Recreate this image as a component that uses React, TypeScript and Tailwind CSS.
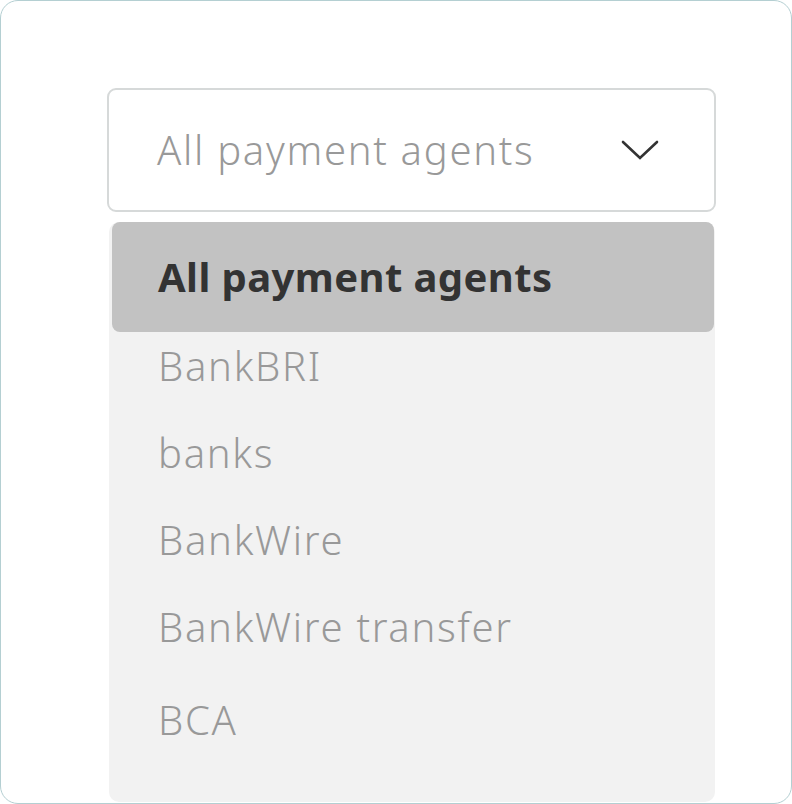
const agents = ['BankBRI', 'banks', 'BankWire', 'BankWire transfer', 'BCA']

export default function App() {
  return (
    <div className="w-[792px] h-[804px] bg-white">
      <div
        className="w-full h-full rounded-[18px] border border-[#b4cfd2] overflow-hidden pt-[87px] pl-[106px]"
        style={{ fontFamily: '"Noto Sans", "Open Sans", sans-serif' }}
      >
        {/* Select box */}
        <div className="w-[609px] h-[124px] rounded-[9px] border-2 border-[#d6d9d9] flex items-center justify-between pl-[48px] pr-[55px]">
          <span className="text-[40px] leading-none text-[#999999] font-light tracking-[1.7px]">All payment agents</span>
          <svg width="38" height="22" viewBox="0 0 38 22" fill="none">
            <path d="M2 3L19 19L36 3" stroke="#333333" strokeWidth="2.6" strokeLinecap="round" strokeLinejoin="miter" />
          </svg>
        </div>

        {/* Options panel */}
        <div className="mt-[10px] ml-[2px] w-[606px] h-[580px] rounded-[10px] bg-[#f2f2f2] pl-[3px] pr-[1px]">
          <div className="h-[110px] rounded-[8px] bg-[#c2c2c2] flex items-center pl-[46px]">
            <span className="text-[40px] leading-none font-bold text-[#333333] tracking-[0.4px]">All payment agents</span>
          </div>
          {agents.map((a, i) => (
            <div
              key={a}
              className={`h-[87px] pl-[46px] pt-[14px] ${i === agents.length - 1 ? 'mt-[6px]' : ''}`}
            >
              <span className="block text-[40px] leading-[40px] text-[#999999] font-light tracking-[1.7px]">{a}</span>
            </div>
          ))}
        </div>
      </div>
    </div>
  )
}
